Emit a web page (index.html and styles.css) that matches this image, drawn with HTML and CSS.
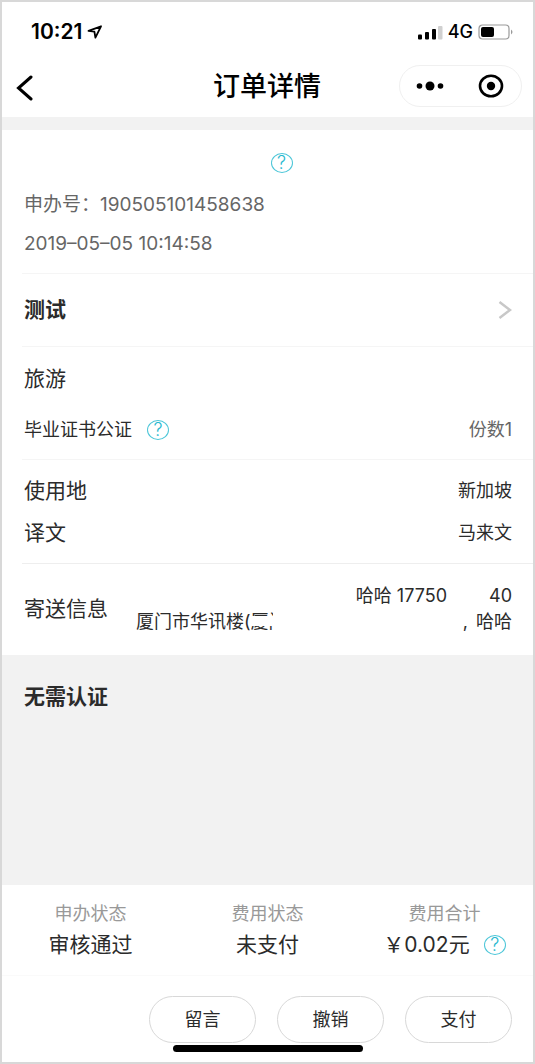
FILE: index.html
```html
<!DOCTYPE html>
<html lang="zh-CN">
<head>
<meta charset="utf-8">
<meta name="viewport" content="width=device-width, initial-scale=1">
<title>订单详情</title>
<link rel="stylesheet" href="styles.css">
</head>
<body>
<div class="screen">
  <div class="status-bar">
    <div class="status-group">
      <span class="clock">10:21</span>
      <svg class="location" width="16" height="14" viewBox="0 0 16 14"><path d="M1.500 5.800 14 1.300 8.400 12.600 7.400 6.600Z" fill="none" stroke="#000" stroke-width="1.800" stroke-linejoin="round"/></svg>
    </div>
    <div class="status-group">
      <svg width="26" height="15" viewBox="0 0 26 15">
        <rect x="1" y="9.500" width="4" height="5" rx="1"/>
        <rect x="8" y="7" width="4" height="7.500" rx="1"/>
        <rect x="15" y="4" width="4" height="10.500" rx="1"/>
        <rect x="21" y="1" width="4.500" height="13.500" rx="1" fill="#d0d0d0"/>
      </svg>
      <span class="network">4G</span>
      <svg width="36" height="16" viewBox="0 0 36 16">
        <rect x="1" y="1" width="30" height="14" rx="3.500" fill="none" stroke="#9a9a9a" stroke-width="1.200"/>
        <rect x="3" y="3" width="13" height="10" rx="2"/>
        <path d="M33 5.500Q36 8 33 10.500Z" fill="#9a9a9a"/>
      </svg>
    </div>
  </div>

  <header class="nav-bar">
    <button class="back" type="button" aria-label="返回">
      <svg width="18" height="26" viewBox="0 0 18 26"><path d="M15 2 2.500 13 15 24" fill="none" stroke="#000" stroke-width="3" stroke-linecap="round" stroke-linejoin="miter"/></svg>
    </button>
    <h1 class="title">订单详情</h1>
    <div class="capsule">
      <button type="button" aria-label="更多">
        <svg width="28" height="10" viewBox="0 0 28 10"><circle cx="3.500" cy="5" r="2.800"/><circle cx="14" cy="5" r="4.500"/><circle cx="24.500" cy="5" r="2.800"/></svg>
      </button>
      <button type="button" aria-label="关闭">
        <svg width="26" height="24" viewBox="0 0 26 24"><ellipse cx="13" cy="12" rx="11" ry="10.300" fill="none" stroke="#000" stroke-width="2.600"/><circle cx="13" cy="12" r="4.200"/></svg>
      </button>
    </div>
  </header>

  <main class="content">
    <section class="summary">
      <div class="summary-head"><button class="help" type="button" aria-label="帮助">?</button></div>
      <p>申办号：190505101458638</p>
      <p>2019–05–05 10:14:58</p>
    </section>

    <section class="block">
      <a class="row person" href="#person">
        <strong>测试</strong>
        <svg width="14" height="18" viewBox="0 0 14 18"><path d="M1.500 1 12 9 1.500 17" fill="none" stroke="#c8c8c8" stroke-width="2.500"/></svg>
      </a>
    </section>

    <section class="block purpose">
      <h2 class="label">旅游</h2>
      <div class="row">
        <span class="value item">毕业证书公证 <button class="help" type="button" aria-label="公证帮助">?</button></span>
        <span class="value muted">份数1</span>
      </div>
    </section>

    <dl class="block details">
      <div class="row"><dt class="label">使用地</dt><dd class="value">新加坡</dd></div>
      <div class="row"><dt class="label">译文</dt><dd class="value">马来文</dd></div>
    </dl>

    <dl class="block delivery">
      <div class="row">
        <dt class="label">寄送信息</dt>
        <dd class="value address">
          <div class="contact"><span>哈哈 17750</span><span>40</span></div>
          <div class="place"><span class="place-start">厦门市华讯楼(<span class="masked">厦门</span></span><span class="place-end">,<span>哈哈</span></span></div>
        </dd>
      </div>
    </dl>

    <section class="notice"><h2>无需认证</h2></section>
  </main>

  <footer class="footer">
    <dl class="totals">
      <div><dt>申办状态</dt><dd>审核通过</dd></div>
      <div><dt>费用状态</dt><dd>未支付</dd></div>
      <div><dt>费用合计</dt><dd>￥0.02元<button class="help" type="button" aria-label="费用帮助">?</button></dd></div>
    </dl>
    <div class="actions">
      <button type="button">留言</button>
      <button type="button">撤销</button>
      <button type="button">支付</button>
    </div>
    <div class="home-indicator"></div>
  </footer>
</div>
</body>
</html>
```
FILE: styles.css
```css
* { box-sizing: border-box; }

body, h1, h2, p, dl, dd { margin: 0; }

body {
  color: #2b2b2b;
  font-family: Inter, "Noto Sans CJK SC", sans-serif;
  font-size: 18px;
  line-height: 26px;
}

button {
  padding: 0;
  border: 0;
  background: none;
  color: inherit;
  font: inherit;
}

svg { display: block; }

.screen {
  display: flex;
  flex-direction: column;
  min-height: 100vh;
  border: 2px solid #d8d8d8;
  background: #fff;
}

.status-bar {
  display: flex;
  justify-content: space-between;
  align-items: center;
  height: 52px;
  padding: 8px 19px 0 29px;
  color: #000;
}

.status-group {
  display: flex;
  align-items: center;
  gap: 5px;
}

.clock { font-size: 21px; font-weight: 600; }
.network { font-size: 18px; font-weight: 500; }

.nav-bar {
  display: grid;
  grid-template-columns: 1fr auto 1fr;
  align-items: center;
  height: 63px;
  padding: 0 11px 0 14px;
  color: #000;
}

.back { justify-self: start; padding-top: 4px; }

.title {
  padding: 3px 4px 0 0;
  font-size: 27px;
  font-weight: 500;
  line-height: 40px;
}

.capsule {
  display: grid;
  grid-template-columns: 1fr 1fr;
  justify-self: end;
  width: 123px;
  height: 42px;
  border: 1px solid #f0f0f0;
  border-radius: 21px;
}

.capsule button { display: grid; place-items: center; }

.content {
  display: flex;
  flex-direction: column;
  flex: 1;
  border-top: 13px solid #f2f2f2;
}

.help {
  width: 22px;
  height: 20px;
  border: 1px solid #4cc6d8;
  border-radius: 50%;
  color: #27b8cf;
  font-size: 18px;
  font-weight: 300;
  line-height: 18px;
}

.summary {
  padding: 21px 22px 9px;
  color: #666;
  font-size: 19px;
}

.summary-head {
  display: flex;
  justify-content: center;
  padding: 2px 0 13px 28px;
}

.summary p { padding: 6px 0 7px; }

.block {
  margin-left: 20px;
  padding: 0 21px 0 2px;
  border-top: 1px solid #f5f5f5;
}

.row {
  display: flex;
  justify-content: space-between;
  align-items: center;
}

.person {
  height: 72px;
  color: inherit;
  font-size: 21px;
  text-decoration: none;
}

.person strong { font-weight: 600; }

.label {
  font-size: 21px;
  font-weight: 400;
  line-height: 30px;
}

.muted { color: #666; }

.purpose { padding-top: 17px; padding-bottom: 16px; }
.purpose .row { padding-top: 23px; }

.item {
  display: flex;
  align-items: center;
  gap: 15px;
}

.details {
  display: grid;
  gap: 12px;
  padding-top: 16px;
  padding-bottom: 15px;
}

.delivery {
  padding-top: 19px;
  padding-bottom: 20px;
  border-color: #eee;
}

.address { width: 376px; }

.contact {
  display: flex;
  justify-content: flex-end;
  gap: 42px;
}

.place { display: flex; justify-content: space-between; }
.place-start { display: flex; }
.place-end { display: flex; gap: 8px; }

.masked {
  position: relative;
  width: 22px;
  height: 21px;
  overflow: hidden;
  white-space: nowrap;
}

.masked::after {
  content: "";
  position: absolute;
  top: 7px;
  left: 0;
  width: 22px;
  height: 10px;
  background: #fff;
}

.notice {
  flex: 1;
  padding: 27px 22px;
  background: #f2f2f2;
}

.notice h2 {
  font-size: 21px;
  font-weight: 600;
  line-height: 30px;
}

.totals {
  display: grid;
  grid-template-columns: repeat(3, 1fr);
  height: 91px;
  padding-top: 16px;
  border-bottom: 1px solid #fafafa;
  text-align: center;
}

.totals dt { color: #999; }

.totals dd {
  display: flex;
  justify-content: center;
  align-items: center;
  gap: 14px;
  padding-top: 3px;
  font-size: 21px;
  line-height: 30px;
}

.actions {
  display: flex;
  justify-content: flex-end;
  gap: 21px;
  padding: 20px 21px 0;
}

.actions button {
  width: 107px;
  height: 47px;
  border: 1px solid #d8d8d8;
  border-radius: 24px;
}

.home-indicator {
  width: 190px;
  height: 7px;
  margin: 2px auto 10px;
  border-radius: 4px;
  background: #000;
}
```
